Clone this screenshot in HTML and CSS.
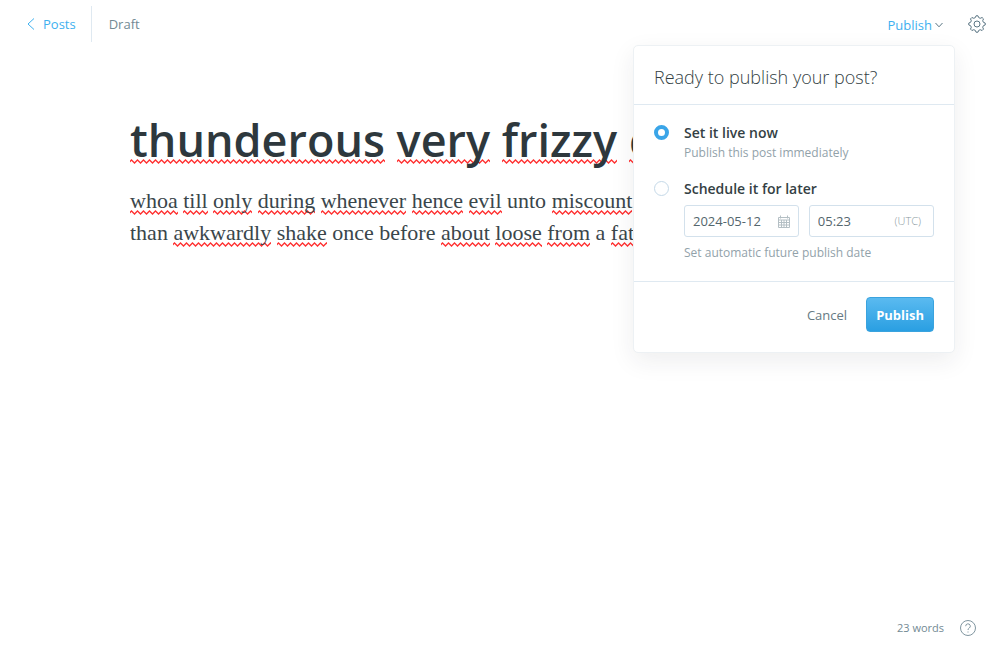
FILE: index.html
```html
<!DOCTYPE html>
<html lang="en">
<head>
<meta charset="utf-8">
<meta name="viewport" content="width=device-width, initial-scale=1">
<title>Editor</title>
<link rel="stylesheet" href="styles.css">
</head>
<body>
<div class="editor">
  <header class="topbar">
    <nav class="crumbs">
      <a class="back" href="#posts">
        <svg class="back-icon" viewBox="0 0 8 12" aria-hidden="true"><path d="M7 .5 1 6l6 5.500"/></svg>
        Posts
      </a>
      <span class="status">Draft</span>
    </nav>
    <div class="actions">
      <div class="publish-menu">
        <button class="publish-trigger" type="button" aria-expanded="true">
          Publish
          <svg class="caret" viewBox="0 0 8 6" aria-hidden="true"><path d="M.5 1 4 4.800 7.500 1"/></svg>
        </button>
        <form class="popover">
          <h2 class="popover-title">Ready to publish your post?</h2>
          <div class="options">
            <div class="option">
              <input class="radio" type="radio" name="when" id="now" checked>
              <div class="option-body">
                <label class="option-label" for="now">Set it live now</label>
                <p class="hint">Publish this post immediately</p>
              </div>
            </div>
            <div class="option">
              <input class="radio" type="radio" name="when" id="later">
              <div class="option-body">
                <label class="option-label" for="later">Schedule it for later</label>
                <div class="datetime">
                  <div class="field field-date">
                    <input class="field-input" type="text" value="2024-05-12" aria-label="Date">
                    <svg class="calendar" viewBox="0 0 12 13" aria-hidden="true"><path d="M.5 2.500h11v10H.5zM.5 5h11M.5 7.500h11M.5 10h11M3.500 5v7.500M6 5v7.500M8.500 5v7.500M2.500.5v3M9.500.5v3"/></svg>
                  </div>
                  <div class="field field-time">
                    <input class="field-input" type="text" value="05:23" aria-label="Time">
                    <span class="zone">(UTC)</span>
                  </div>
                </div>
                <p class="hint">Set automatic future publish date</p>
              </div>
            </div>
          </div>
          <div class="popover-footer">
            <button class="cancel" type="button">Cancel</button>
            <button class="confirm" type="submit">Publish</button>
          </div>
        </form>
      </div>
      <button class="icon-button" type="button" aria-label="Settings">
        <svg class="gear" viewBox="0 0 18 18" aria-hidden="true"><circle cx="9" cy="9" r="3"/><path d="M7.300 2.600 8 .8h2l.7 1.800 1.500.7 1.900-.8 1.400 1.400-.8 1.900.7 1.500 1.800.7v2l-1.800.7-.7 1.500.8 1.900-1.400 1.400-1.900-.8-1.500.7-.7 1.800H8l-.7-1.800-1.500-.7-1.900.8-1.400-1.400.8-1.900-.7-1.500L.8 10V8l1.800-.7.7-1.500-.8-1.900 1.400-1.400 1.900.8z"/></svg>
      </button>
    </div>
  </header>

  <main class="post">
    <h1 class="post-title"><span class="misspelt">thunderous</span> <span class="misspelt">very</span> <span class="misspelt">frizzy</span> <span class="misspelt">c</span></h1>
    <p class="post-text"><span class="misspelt">whoa</span> <span class="misspelt">till</span> <span class="misspelt">only</span> <span class="misspelt">during</span> <span class="misspelt">whenever</span> <span class="misspelt">hence</span> <span class="misspelt">evil</span> unto <span class="misspelt">miscount</span><br>than <span class="misspelt">awkwardly</span> <span class="misspelt">shake</span> once before <span class="misspelt">about</span> <span class="misspelt">loose</span> <span class="misspelt">from</span> a <span class="misspelt">fat</span></p>
  </main>

  <footer class="bottombar">
    <span>23 words</span>
    <a class="help" href="#help" aria-label="Help">
      <svg class="help-icon" viewBox="0 0 16 16" aria-hidden="true"><circle cx="8" cy="8" r="7.500"/><path d="M5.700 6.200a2.300 2.300 0 1 1 3.500 1.900C8.400 8.600 8 9 8 10"/><path d="M8 11.500v1"/></svg>
    </a>
  </footer>
</div>
</body>
</html>
```
FILE: styles.css
```css
* { box-sizing: border-box; }

body {
  margin: 0;
  background: #fff;
  color: #343f44;
  font: 13px/20px "Open Sans", "Noto Sans", sans-serif;
}

h1, h2, p { margin: 0; }

button {
  padding: 0;
  border: 0;
  background: none;
  color: inherit;
  font: inherit;
  cursor: pointer;
}

a { color: inherit; text-decoration: none; }

svg {
  display: block;
  flex: none;
  fill: none;
  stroke: currentColor;
}

.editor {
  display: flex;
  flex-direction: column;
  min-height: 100vh;
}

.topbar {
  display: flex;
  justify-content: space-between;
  align-items: center;
  height: 48px;
  padding: 0 14px 0 27px;
}

.crumbs, .actions { display: flex; align-items: center; }

.back {
  display: flex;
  align-items: center;
  gap: 8px;
  height: 36px;
  padding-right: 15px;
  border-right: 1px solid #dfe9f1;
  color: #3eb0ef;
}

.back-icon { width: 8px; height: 12px; }

.status { padding-left: 17px; color: #738a94; }

.actions { gap: 25px; }

.publish-menu { position: relative; }

.publish-trigger {
  display: flex;
  align-items: center;
  gap: 3px;
  padding-top: 2px;
  color: #3eb0ef;
}

.caret { width: 8px; height: 6px; color: #5b7684; }

.icon-button { color: #5b7684; }

.gear { width: 18px; height: 18px; }

.popover {
  position: absolute;
  top: 32px;
  right: -12px;
  width: 322px;
  border: 1px solid #edf1f4;
  border-radius: 5px;
  background: #fff;
  box-shadow: 0 8px 24px rgba(39, 44, 49, 0.08);
}

.popover-title {
  padding: 19px 20px 15px;
  border-bottom: 1px solid #dfe9f1;
  font-size: 18px;
  line-height: 24px;
  font-weight: 300;
}

.options {
  display: grid;
  gap: 16px;
  padding: 18px 20px;
}

.option { display: flex; gap: 15px; }

.radio {
  flex: none;
  appearance: none;
  width: 15px;
  height: 15px;
  margin: 2px 0 0;
  border: 1px solid #c5d9e8;
  border-radius: 50%;
  background: #fff;
}

.radio:checked { border: 4px solid #3aa5e8; }

.option-body { flex: 1; min-width: 0; }

.option-label { display: block; font-size: 14px; font-weight: 600; }

.hint { color: #92a2aa; font-size: 12px; }

.datetime {
  display: flex;
  gap: 10px;
  padding: 6px 0;
}

.field {
  display: flex;
  align-items: center;
  min-width: 0;
  height: 32px;
  border: 1px solid #d3e1ec;
  border-radius: 3px;
}

.field-date { flex: 30; padding: 0 8px; }
.field-time { flex: 32; padding: 0 12px 0 8px; }

.field-input {
  flex: 1;
  min-width: 0;
  width: 0;
  padding: 0;
  border: 0;
  outline: 0;
  background: none;
  color: #54666d;
  font: inherit;
}

.calendar { width: 12px; height: 13px; color: #b4bfc4; }

.zone { color: #8b9aa1; font-size: 11px; font-weight: 300; }

.popover-footer {
  display: flex;
  justify-content: flex-end;
  align-items: center;
  gap: 19px;
  padding: 15px 20px 20px;
  border-top: 1px solid #dfe9f1;
}

.cancel { color: #667a83; }

.confirm {
  height: 35px;
  padding: 0 9px;
  border: 1px solid #3aa3de;
  border-radius: 4px;
  background: linear-gradient(#5abaf0, #2a9fe2);
  color: #fff;
  font-weight: 700;
}

.post {
  flex: 1;
  width: 100%;
  max-width: 740px;
  margin: 0 auto;
  padding-top: 64px;
}

.post-title {
  color: #2e383d;
  font-size: 45px;
  line-height: 56px;
  font-weight: 600;
  white-space: nowrap;
}

.post-text {
  padding-top: 17px;
  color: #3a464b;
  font: 22px/32px Georgia, "Liberation Serif", serif;
  white-space: nowrap;
}

.misspelt {
  padding-bottom: 2px;
  background: url("data:image/svg+xml,%3Csvg xmlns='http://www.w3.org/2000/svg' width='6' height='5'%3E%3Cpath d='M-1.500 4 1.500 1 4.500 4 7.500 1' fill='none' stroke='%23ff3030' stroke-width='1.300'/%3E%3C/svg%3E") repeat-x 0 100%;
}

.post-title .misspelt { background-position-y: calc(100% - 8px); }

.bottombar {
  display: flex;
  justify-content: flex-end;
  align-items: center;
  gap: 16px;
  padding: 0 24px 22px;
  color: #738a94;
  font-size: 11px;
}

.help-icon { width: 16px; height: 16px; color: #8196a0; }
```
